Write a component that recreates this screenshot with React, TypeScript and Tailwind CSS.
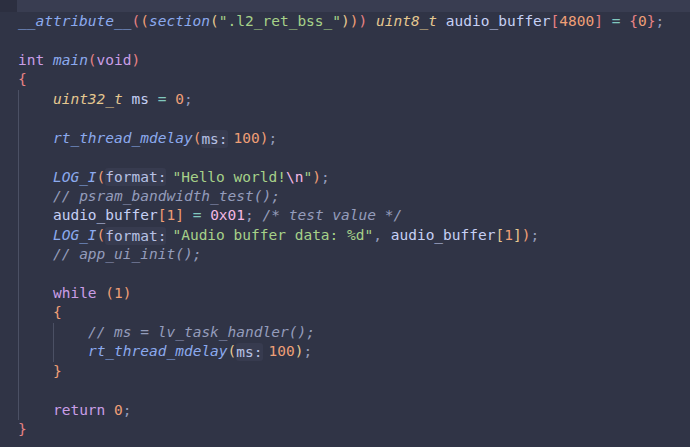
import React from 'react';

type Tok = [string, string];

const fn = 'text-[#8caaee] italic';
const kw = 'text-[#ca9ee6]';
const ty = 'text-[#e5c890] italic';
const num = 'text-[#ef9f76]';
const str = 'text-[#a6d189]';
const op = 'text-[#81c8be]';
const b1 = 'text-[#e78284]';
const b2 = 'text-[#ef9f76]';
const b3 = 'text-[#e5c890]';
const cm = 'text-[#949cbb] italic';
const esc = 'text-[#f4b8e4]';
const punc = 'text-[#949cbb]';
const id = 'text-[#c6d0f5]';
const hint = 'hint';
const sp = 'text-[#c6d0f5]';

interface Line {
  guides: number; // indent cells drawn with a guide
  toks: Tok[];
}

const lines: Line[] = [
  {
    guides: 0,
    toks: [
      ['__attribute__', fn], ['(', b1], ['(', b2], ['section', fn], ['(', b3],
      ['".l2_ret_bss_"', str], [')', b3], [')', b2], [')', b1], [' ', sp],
      ['uint8_t', ty], [' ', sp], ['audio_buffer', id], ['[', b1], ['4800', num],
      [']', b1], [' ', sp], ['=', op], [' ', sp], ['{', b1], ['0', num], ['}', b1], [';', punc],
    ],
  },
  { guides: 0, toks: [] },
  { guides: 0, toks: [['int', kw], [' ', sp], ['main', fn], ['(', b1], ['void', kw], [')', b1]] },
  { guides: 0, toks: [['{', b1]] },
  { guides: 1, toks: [['uint32_t', ty], [' ', sp], ['ms', id], [' ', sp], ['=', op], [' ', sp], ['0', num], [';', punc]] },
  { guides: 1, toks: [] },
  { guides: 1, toks: [['rt_thread_mdelay', fn], ['(', b2], ['ms:', hint], ['100', num], [')', b2], [';', punc]] },
  { guides: 1, toks: [] },
  {
    guides: 1,
    toks: [['LOG_I', fn], ['(', b2], ['format:', hint], ['"Hello world!', str], ['\\n', esc], ['"', str], [')', b2], [';', punc]],
  },
  { guides: 1, toks: [['// psram_bandwidth_test();', cm]] },
  {
    guides: 1,
    toks: [
      ['audio_buffer', id], ['[', b2], ['1', num], [']', b2], [' ', sp], ['=', op], [' ', sp],
      ['0x01', esc], [';', punc], [' ', sp], ['/* test value */', cm],
    ],
  },
  {
    guides: 1,
    toks: [
      ['LOG_I', fn], ['(', b2], ['format:', hint], ['"Audio buffer data: %d"', str], [',', punc], [' ', sp],
      ['audio_buffer', id], ['[', b3], ['1', num], [']', b3], [')', b2], [';', punc],
    ],
  },
  { guides: 1, toks: [['// app_ui_init();', cm]] },
  { guides: 1, toks: [] },
  { guides: 1, toks: [['while', kw], [' ', sp], ['(', b2], ['1', num], [')', b2]] },
  { guides: 1, toks: [['{', b2]] },
  { guides: 2, toks: [['// ms = lv_task_handler();', cm]] },
  { guides: 2, toks: [['rt_thread_mdelay', fn], ['(', b3], ['ms:', hint], ['100', num], [')', b3], [';', punc]] },
  { guides: 1, toks: [['}', b2]] },
  { guides: 1, toks: [] },
  { guides: 1, toks: [['return', kw], [' ', sp], ['0', num], [';', punc]] },
  { guides: 0, toks: [['}', b1]] },
];

const CodeLine: React.FC<{ line: Line }> = ({ line }) => {
  const cells = [];
  for (let i = 0; i < line.guides; i++) {
    cells.push(<span key={'g' + i} className="block w-[34.96px] shrink-0 self-stretch border-l border-[#4b5064]" />);
  }
  // lines without a guide but still indented
  const pad = line.guides === 0 ? null : null;

  return (
    <div className="flex h-[19.43px] items-center whitespace-pre">
      {cells}
      {pad}
      {line.toks.map(([text, cls], i) =>
        cls === 'hint' ? (
          <span
            key={i}
            className="mr-[6px] rounded-[3px] bg-[#373b4f] leading-[18px] text-[#b8c1e4]"
          >
            {text}
          </span>
        ) : (
          <span key={i} className={cls}>
            {text}
          </span>
        )
      )}
    </div>
  );
};

export default function App() {
  return (
    <div
      className="h-[447px] w-[690px] overflow-hidden bg-[#303446] text-[14.5px] text-[#c6d0f5]"
      style={{ fontFamily: '"DejaVu Sans Mono", "Liberation Mono", monospace' }}
    >
      <div className="flex h-[12.3px]">
        <div className="w-[17px] bg-[#2c2f40]" />
        <div className="flex-1 bg-[#393d51]" />
      </div>
      <div className="pl-[18px]">
        {lines.map((line, i) => (
          <CodeLine key={i} line={line} />
        ))}
      </div>
    </div>
  );
}
